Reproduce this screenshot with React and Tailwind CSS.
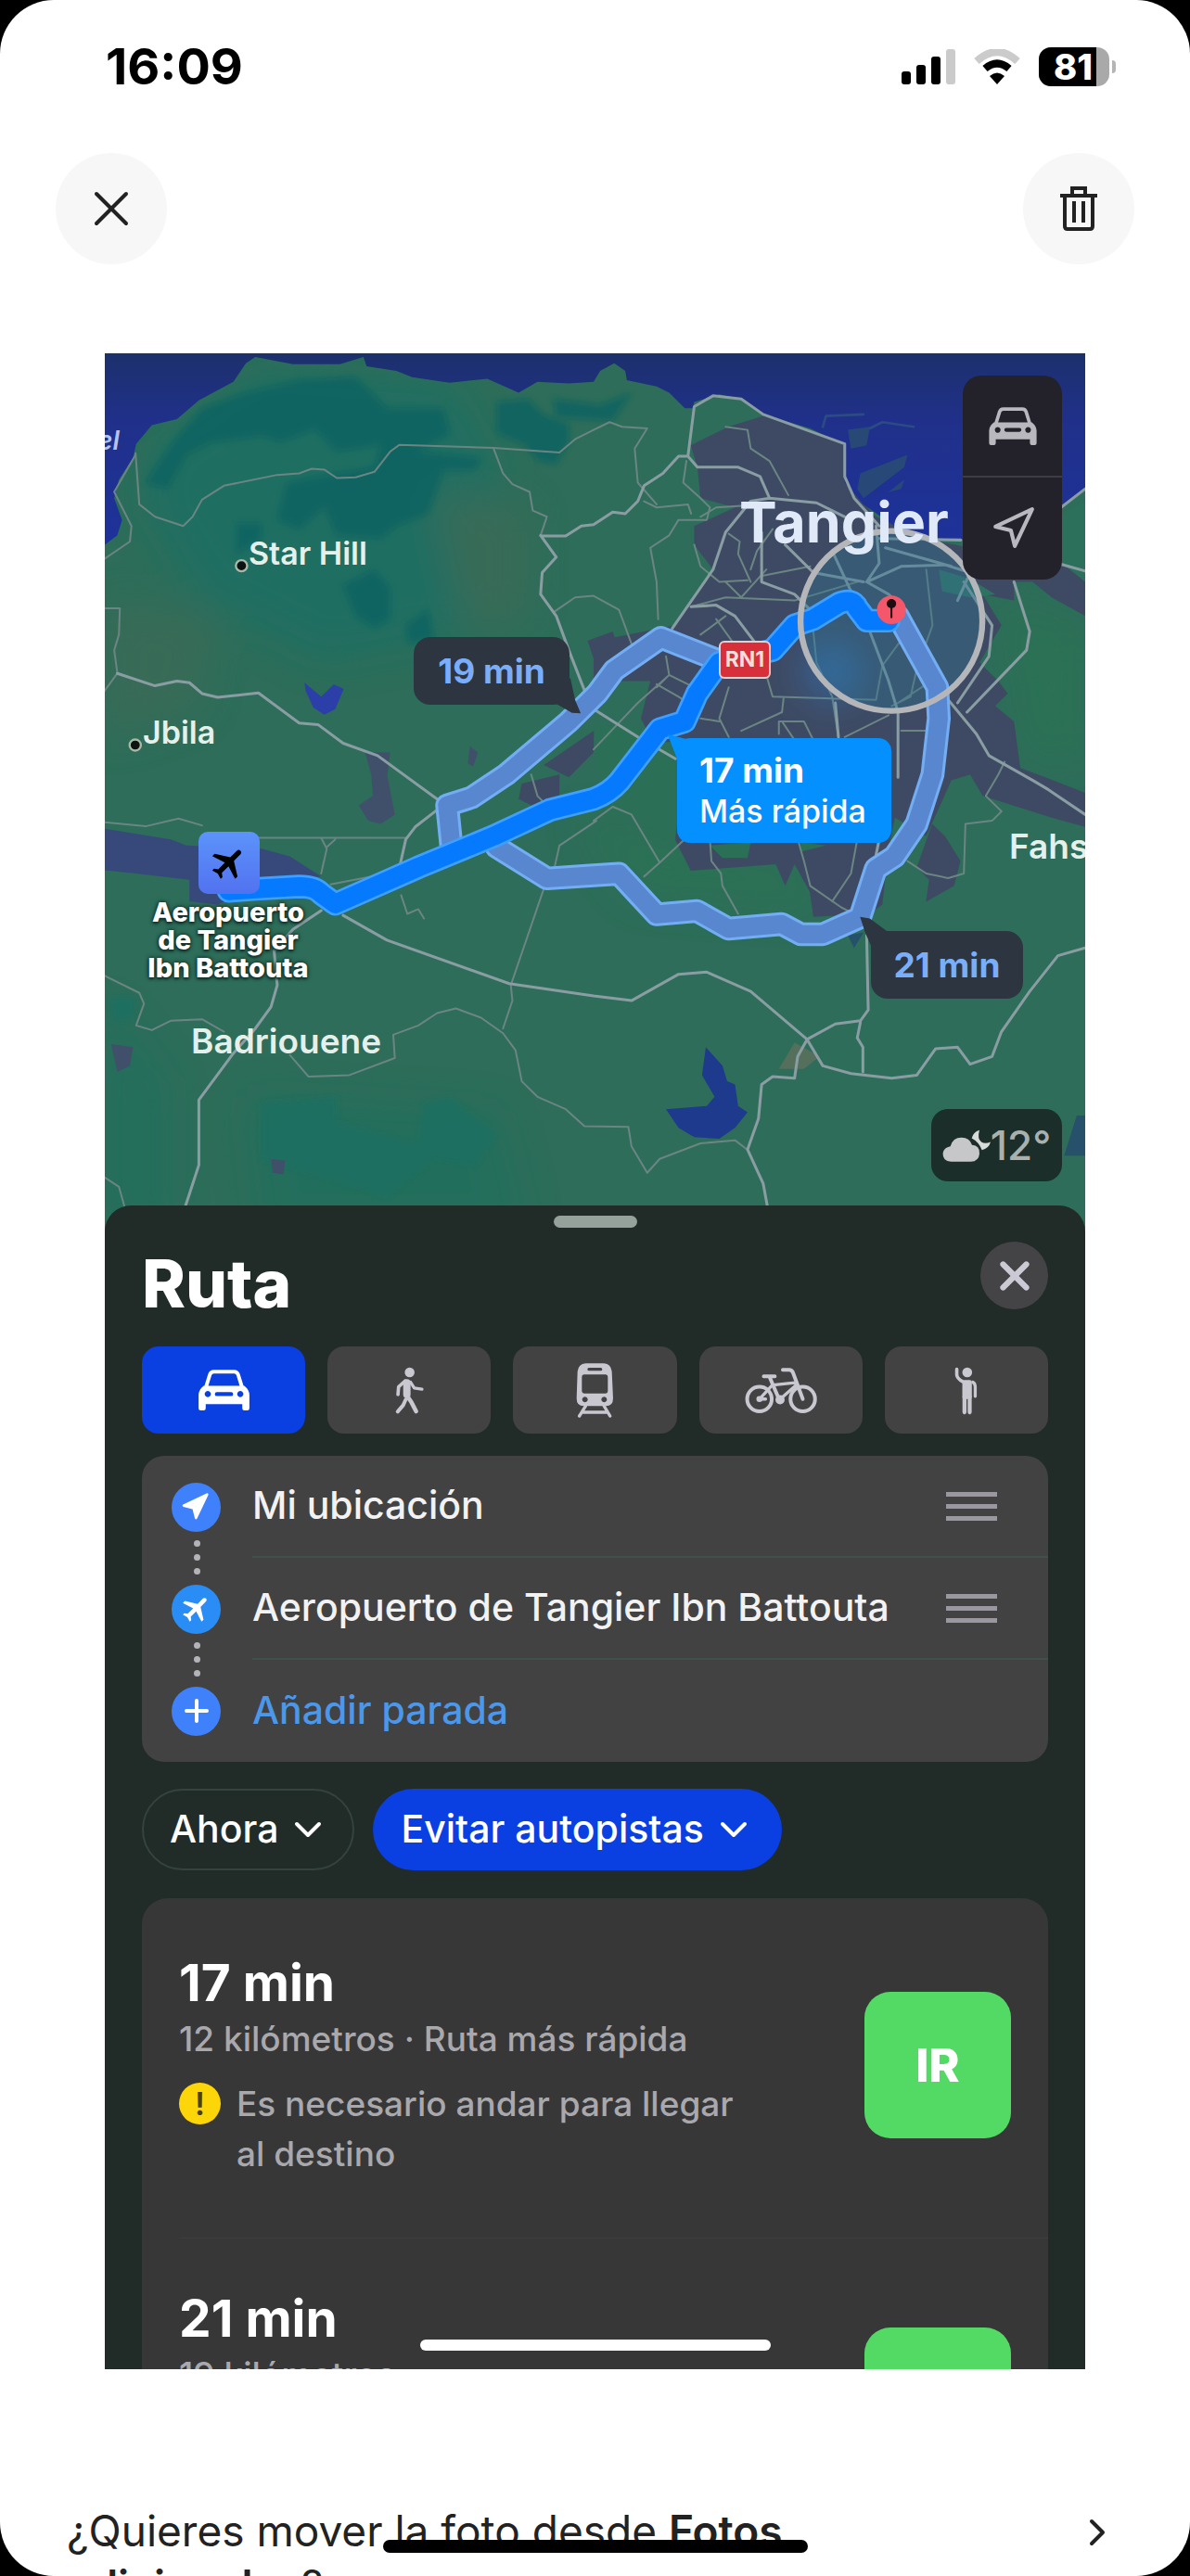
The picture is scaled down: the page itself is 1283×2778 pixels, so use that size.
import { ChevronDown, ChevronRight, Navigation, X } from 'lucide-react';
import { MdFlight } from 'react-icons/md';

function CarIcon({ className }) {
  return (
    <svg viewBox="0 0 50 42" className={className} fill="none" aria-hidden="true">
      <path d="M7 19 L11 6 Q12 3 15 3 H35 Q38 3 39 6 L43 19" stroke="currentColor" strokeWidth="3.6" />
      <path
        fill="currentColor"
        fillRule="evenodd"
        d="M5 17 H45 Q50 21 50 26 V39 Q50 41 48 41 H45 Q43 41 43 39 V35 H7 V39 Q7 41 5 41 H2 Q0 41 0 39 V26 Q0 21 5 17 Z
          M9 22 a3 3 0 1 0 0.1 0 Z M41 22 a3 3 0 1 0 0.1 0 Z
          M18 23 H32 Q34 23 34 25 Q34 27 32 27 H18 Q16 27 16 25 Q16 23 18 23 Z"
      />
    </svg>
  );
}

function WalkIcon() {
  return (
    <svg viewBox="250 95 105 160" className="w-[35px] h-[53px]" fill="none" stroke="currentColor" strokeLinecap="round" strokeLinejoin="round" aria-hidden="true">
      <circle cx="303" cy="116" r="16" fill="currentColor" stroke="none" />
      <path d="M294 150 L294 188" strokeWidth="24" />
      <path d="M288 144 L267 163 L265 188" strokeWidth="11" />
      <path d="M306 148 L318 167 L343 171" strokeWidth="10" />
      <path d="M294 192 L308 212 L324 243" strokeWidth="14" />
      <path d="M290 205 L282 223 L264 244" strokeWidth="12" />
    </svg>
  );
}

function TrainIcon() {
  return (
    <svg viewBox="842 88 126 180" className="w-[42px] h-[60px]" aria-hidden="true">
      <path
        fill="currentColor"
        fillRule="evenodd"
        d="M876 92 H936 Q958 94 961 118 L965 205 Q965 230 942 230 H870 Q847 230 847 205 L850 118 Q853 94 876 92 Z
          M872 128 Q864 128 864 138 V180 Q864 189 873 189 H940 Q948 189 948 180 V138 Q948 128 940 128 Z
          M887 106 Q882 106 882 111 Q882 116 887 116 H925 Q930 116 930 111 Q930 106 925 106 Z
          M874 200 a9 9 0 1 0 0.1 0 Z M936 200 a9 9 0 1 0 0.1 0 Z"
      />
      <path d="M876 230 L856 262 M936 230 L955 262 M868 250 H944" stroke="currentColor" strokeWidth="10" strokeLinecap="round" />
    </svg>
  );
}

function BikeIcon() {
  return (
    <svg viewBox="1386 98 240 160" className="w-20 h-[53px]" fill="none" stroke="currentColor" strokeWidth="12" strokeLinecap="round" strokeLinejoin="round" aria-hidden="true">
      <circle cx="1436" cy="206" r="40" />
      <circle cx="1577" cy="206" r="40" />
      <path d="M1450 132 H1486 M1468 132 L1500 207 M1512 111 H1534 Q1543 112 1546 122 L1577 206" />
      <path d="M1480 160 L1552 153 M1556 160 L1503 207 M1436 206 L1478 160 M1436 206 H1456" strokeWidth="10" />
      <circle cx="1503" cy="208" r="9" fill="currentColor" />
      <circle cx="1436" cy="206" r="10" fill="currentColor" stroke="none" />
    </svg>
  );
}

function HailIcon() {
  return (
    <svg viewBox="538 95 80 160" className="w-[27px] h-[53px]" fill="none" stroke="currentColor" strokeLinecap="round" strokeLinejoin="round" aria-hidden="true">
      <circle cx="582" cy="116" r="16" fill="currentColor" stroke="none" />
      <path d="M548 106 V124 Q549 136 567 146" strokeWidth="11" />
      <path d="M573 148 H590 V196 H573 Z" strokeWidth="14" fill="currentColor" />
      <path d="M600 148 Q608 152 608 164 V194" strokeWidth="10" />
      <path d="M573 196 V246 M590 196 V246" strokeWidth="13" />
    </svg>
  );
}

function TrashIcon() {
  return (
    <svg viewBox="0 0 40 48" className="w-10 h-12" fill="none" stroke="currentColor" strokeWidth="4" aria-hidden="true">
      <path d="M0 10 H40 M13 10 V2 H27 V10 M5 10 V43 Q5 46 8 46 H32 Q35 46 35 43 V10" />
      <path d="M15 16 V39 M25 16 V39" />
    </svg>
  );
}

function StatusIcons() {
  return (
    <div className="flex items-center gap-5">
      <svg viewBox="0 0 58 38" className="w-[58px] h-[38px]" aria-hidden="true">
        <rect x="0" y="24" width="10" height="14" rx="3" />
        <rect x="16" y="17" width="10" height="21" rx="3" />
        <rect x="32" y="8" width="10" height="30" rx="3" />
        <rect x="48" y="0" width="10" height="38" rx="3" fill="#cbcbcb" />
      </svg>
      <svg viewBox="0 0 50 38" className="w-[50px] h-[38px]" fill="none" aria-hidden="true">
        <path d="M3 13 Q25 -7 47 13" stroke="#cbcbcb" strokeWidth="8" />
        <path d="M12 21 Q25 10 38 21" stroke="#000" strokeWidth="8" />
        <path d="M17 29 Q25 22 33 29 L25 38 Z" fill="#000" />
      </svg>
      <div className="flex items-center gap-[3px]">
        <div className="w-[76px] h-[42px] rounded-[13px] bg-[#a9a9a9] flex">
          <div className="w-[62px] rounded-l-[13px] bg-black pr-1 text-white text-[38px] leading-[42px] font-extrabold text-right">81</div>
        </div>
        <div className="w-1 h-[14px] rounded-r-full bg-[#b5b5b5]" />
      </div>
    </div>
  );
}

const northRoute = 'M1105 1590 L1092 1460 L1170 1435 L1280 1361 L1480 1190 L1570 1100 L1625 1025 L1774 920 L1950 990';
const southRoute =
  'M1250 1595 L1410 1696 L1559 1686 L1640 1681 L1760 1812 L1889 1801 L1989 1858 L2159 1843 L2220 1876 L2290 1876 L2409 1822 L2459 1665 L2519 1625 L2589 1521 L2640 1361 L2660 1180 L2655 1080 L2529 850';
const fastRoute =
  'M395 1736 L480 1730 L620 1722 Q670 1722 690 1745 L735 1778 L1000 1660 L1240 1560 L1420 1475 L1559 1440 Q1610 1420 1640 1385 L1770 1215 L1849 1190 L1889 1100 L1960 1000 L2130 960 L2200 880 L2259 860 L2340 810 Q2385 790 2400 825 L2430 865 L2500 865';

// Land, water, streets and the three route lines
function MapDrawing() {
  return (
    <svg viewBox="0 3 3127 2840" preserveAspectRatio="none" className="w-full h-full" fill="none" strokeLinejoin="round" strokeLinecap="round" aria-hidden="true">
      <defs>
        <linearGradient id="sea" x1="0" y1="0" x2="0" y2="1">
          <stop offset="0" stopColor="#1c306c" />
          <stop offset="0.35" stopColor="#20308a" />
          <stop offset="1" stopColor="#1d329a" />
        </linearGradient>
        <filter id="soft" x="-20%" y="-20%" width="140%" height="140%">
          <feGaussianBlur stdDeviation="10" />
        </filter>
        <filter id="wide" x="-50%" y="-50%" width="200%" height="200%">
          <feGaussianBlur stdDeviation="60" />
        </filter>
      </defs>
      <rect width="3127" height="2850" fill="#2d6d59" />

      {/* vegetation */}
      <g filter="url(#wide)" opacity="0.6">
        <path fill="#167068" d="M150 300 L500 60 L1100 100 L1250 350 L1200 900 L700 1000 L300 800 L120 500 Z" />
        <path fill="#1c705f" d="M450 2400 L1250 2450 L1350 2850 L500 2850 Z M0 2100 L200 2350 L200 2850 L0 2850 Z" />
        <path fill="#2a7552" d="M2850 800 L3127 900 L3127 1300 L2950 1300 Z M1500 1500 L2200 1650 L2300 1800 L1700 1750 Z" />
        <path fill="#3f6b56" d="M1050 450 L1350 500 L1350 850 L1150 900 Z M0 800 L350 850 L300 1150 L0 1250 Z" />
      </g>
      <g filter="url(#soft)" fill="#0c6462" opacity="0.85">
        <path d="M130 420 L210 300 L310 180 L450 130 L620 90 L800 80 L900 180 L1080 180 L1100 260 L1000 320 L1200 340 L1180 380 L1080 380 L1030 520 L930 560 L880 600 L740 590 L700 500 L620 570 L550 540 L580 420 L740 390 L860 370 L880 300 L740 320 L670 250 L560 290 L500 270 L340 290 L260 330 L200 440 Z" />
        <path d="M1250 160 L1350 150 L1400 200 L1480 230 L1480 290 L1440 360 L1380 350 L1340 300 L1250 260 Z M1430 150 L1580 170 L1680 130 L1620 220 L1440 210 Z" />
        <path d="M420 550 L500 550 L500 600 L420 650 Z M760 750 L860 700 L910 760 L910 860 L860 890 L800 850 Z M960 880 L1030 830 L1050 920 L970 940 Z" />
        <path fill="#1b6f62" d="M500 2420 L740 2400 L740 2480 L1000 2560 L1020 2420 L1100 2400 L1250 2520 L1180 2620 L1050 2600 L900 2720 L500 2600 Z M20 2080 L100 2080 L90 2150 L20 2160 Z" />
      </g>

      {/* city ground */}
      <path
        fill="#3e4a63"
        d="M1869 300 L1989 240 L2100 205 L2300 270 L2360 300 L2370 430 L2460 530 L2660 610 L3060 690 L3127 700 L3127 850 L3020 790 L2960 740 L2900 740 L2900 800 L2800 780 L2860 880 L2790 1000 L2850 1060 L2880 1100 L2840 1140 L2900 1190 L2920 1340 L3000 1370 L3127 1420 L3127 1530 L3020 1500 L2800 1430 L2760 1361 L2700 1380 L2620 1560 L2520 1500 L2500 1600 L2480 1780 L2440 1810 L2260 1820 L2249 1741 L2200 1650 L2170 1720 L2140 1650 L1869 1671 L1819 1571 L1859 1250 L1750 1260 L1710 1180 L1740 1060 L1600 1060 L1559 1090 L1559 950 L1620 920 L1820 880 L1940 700 L1880 620 L1880 560 L2010 500 L1900 470 L1890 370 Z"
      />
      <path fill="#2b7056" d="M1559 1200 L1700 1210 L1790 1260 L1820 1300 L1820 1600 L1700 1500 L1600 1500 Z M2220 1580 L2300 1590 L2220 1610 Z M1930 1590 L2060 1580 L2050 1630 L1970 1630 Z" />
      <path fill="#2f7163" d="M2660 700 L2760 730 L2840 780 L2760 790 L2670 770 Z" />
      <path fill="#3e4a63" d="M2639 1520 L2680 1560 L2729 1640 L2709 1720 L2619 1771 L2629 1700 L2590 1660 Z M1330 1390 L1450 1361 L1450 1430 L1400 1480 L1320 1440 Z M1400 1330 L1560 1220 L1559 1290 L1480 1370 Z M1540 930 L1620 900 L1640 960 L1560 990 Z" />
      <path fill="#37497a" d="M0 1536 L210 1570 L260 1590 L500 1600 L590 1625 L690 1690 L540 1700 L360 1780 L270 1770 L270 1700 L100 1680 L0 1670 Z" />
      <path fill="#40506a" d="M850 1361 L900 1361 L925 1490 L880 1520 L840 1510 L810 1460 L855 1430 Z M830 1290 L910 1290 L900 1370 L850 1361 Z M20 2230 L90 2240 L80 2300 L40 2320 Z M530 2600 L575 2605 L570 2650 L535 2645 Z M1165 1270 L1190 1290 L1175 1335 L1158 1325 Z" />

      {/* sea */}
      <path
        fill="url(#sea)"
        d="M0 0 V620 L40 590 L55 540 L30 470 L45 410 L90 340 L100 295 L150 235 L230 215 L300 155 L410 95 L450 35 L480 15 L600 38 L750 38 L825 15 L835 45 L930 60 L980 80 L1100 98 L1220 85 L1320 130 L1380 95 L1480 100 L1559 95 L1580 60 L1625 35 L1660 60 L1665 90 L1760 110 L1800 130 L1850 180 L1875 180 L1880 160 L1960 135 L2030 150 L2100 200 L2250 245 L2360 300 L2360 420 L2420 490 L2560 590 L2700 605 L2790 600 L3050 500 L3127 440 V0 Z"
      />
      <path fill="#2c6f5a" d="M3050 520 L3127 480 L3127 740 L3040 670 Z" />
      <path fill="#2b5070" opacity="0.8" d="M2370 250 L2440 240 L2430 300 L2380 310 Z M2410 390 L2560 330 L2550 370 L2420 470 L2400 440 Z M2500 450 L2550 410 L2540 440 Z" />
      <path stroke="#2b4b84" strokeWidth="8" d="M2290 240 L2300 205 L2420 200 M2440 245 L2480 225 L2580 240" />
      <path fill="#2c3fa8" d="M637 1065 L690 1110 L730 1070 L762 1085 L735 1150 L700 1168 L665 1145 L640 1090 Z" />
      <path fill="#1d3a8c" d="M1917 2240 L1970 2300 L1985 2350 L2010 2360 L2020 2430 L2050 2450 L2010 2500 L1960 2535 L1880 2530 L1830 2500 L1790 2440 L1920 2430 L1945 2400 L1905 2330 Z" />
      <path fill="#5f6f5e" d="M2200 2225 L2280 2270 L2230 2310 L2150 2310 Z" opacity="0.8" />
      <path fill="#27506a" d="M3100 2460 L3127 2460 L3127 2590 L3060 2590 Z M2370 1880 L2420 1870 L2390 1920 Z" />

      {/* minor streets */}
      <g stroke="#6b8583" strokeWidth="6">
        <path d="M98 325 L110 490 L160 530 L250 560 L280 530 L310 475 L380 430 L550 395 L620 390 L660 375 L700 378 L740 405 L800 403 L860 385 L910 320 L940 298 L1240 308 L1450 323 L1500 280 L1559 250 L1610 225 L1650 240 L1730 245 L1690 310 L1700 420 L1760 490" />
        <path d="M1240 310 L1270 390 L1300 425 L1355 450 L1365 510 L1410 530 L1390 590 M1435 835 L1500 790 L1559 785 L1640 830 L1680 940 M0 825 L48 825 L45 910 L30 960 L40 1035 L0 1090 M98 330 L30 450 L85 560 L80 610 L0 665" />
        <path d="M0 1515 L130 1528 L235 1503 L310 1525 M490 1565 L960 1565 M690 1565 L708 1600 L690 1680 M735 1570 L708 1595 M720 1715 L850 1690 L940 1650 M945 1750 L965 1810 L1000 1795 L1018 1825" />
        <path d="M0 2010 L110 2065 L125 2100 L100 2170 L150 2185 L210 2155 L310 2150 L380 2190 M590 2265 L650 2335 L780 2330 L925 2275 L920 2200 L1000 2170 L1060 2130 L1120 2115 L1200 2145 L1270 2195 L1310 2250 L1330 2350 L1380 2400 L1470 2440 L1530 2495 L1670 2497 L1680 2560 L1730 2645 L1770 2600 L1900 2550 L2010 2540 L2049 2570 M1400 1730 L1295 2040 L1300 2090 L1270 2180" />
        <path d="M0 2660 L45 2690 L70 2780 M1360 1361 L1380 1430 L1420 1471 M1568 1510 L1450 1590 L1430 1680 M1559 1510 L1620 1465 L1680 1490 L1770 1645 L1860 1560 M1770 1645 L1720 1690 M1930 1570 L1935 1640 L1965 1680 L1970 1720 L2020 1810" />
        <path d="M1855 350 L1845 420 L1900 470 L1930 500 L1920 540 L1830 540 L1800 590 L1740 630 L1760 740 L1765 860 M1720 480 L1760 500 L1860 490 L1870 520 M1880 620 L1900 690 L1960 740 L2050 735 M1980 240 L2050 250 L2060 310 L2120 350 L2180 460" />
        <path d="M1900 530 L1950 500 L2030 495 M1990 585 L2025 610 L2020 650 L2060 740 M2130 570 L2080 640 L2060 700 M2100 720 L2250 690 M1980 740 L2030 790 L2110 700 M1870 820 L1980 790 L2200 800 L2400 740 M1900 910 L1980 850 M1950 860 L2000 930" />
        <path d="M1790 980 L1800 1040 L1870 1075 M1760 1080 L1800 1040 M1760 1070 L1830 1110 L1860 1130 M1559 1280 L1700 1130 L1800 1040 M2080 1030 L2110 1040 L2130 1110 L2460 1120 L2480 1010 L2560 900 M2165 1115 L2160 1160 L2030 1220 M2260 900 L2270 1000 L2320 1110 L2340 1240 M1990 1080 L1960 1180 L1990 1240 M1900 1180 L1960 1190" />
        <path d="M2150 1230 L2150 1190 L2230 1190 L2260 1250 M2160 1190 L2200 1250 M2540 1220 L2620 1220 M2360 1240 L2500 1170 M2530 1130 L2620 1070 M2510 1140 L2570 1110 L2590 1020 L2640 880 L2620 700 M2210 1569 L2230 1640 L2250 1720 L2350 1790 L2370 1800 M2400 1570 L2380 1680 L2320 1770 M2560 1640 L2620 1680 L2690 1695 L2740 1680 L2745 1520 L2830 1510 L2860 1480 L2810 1430 L2850 1361 L2870 1320" />
      </g>

      {/* main streets */}
      <g stroke="#899da3" strokeWidth="9">
        <path d="M40 1035 L160 1075 L230 1060 L270 1065 L310 1100 L360 1112 L490 1098 L620 1195 L680 1200 L760 1260 L870 1300 L1060 1440 M1060 1475 L990 1530 L960 1570 L940 1660 M760 1815 L900 1895 L1290 2035 L1559 2075 L1680 2090 L1830 2005 L1920 1998 L2060 2060 L2240 2215 L2290 2300 L2380 2325 L2510 2340 L2590 2330 L2650 2245 L2720 2240 L2760 2295 L2830 2270 L2860 2190 L2950 2060 L3040 1945 L3127 1920" />
        <path d="M690 1800 L600 1860 L540 1930 L550 2040 L530 2110 L480 2180 L410 2260 L300 2410 L300 2620 L245 2790 M2240 2215 L2330 2165 L2410 2155 L2435 2120 L2430 1880 M2410 2160 L2400 2210 L2418 2240 L2418 2320 M2240 2215 L2210 2270 L2200 2340 L2130 2335 L2095 2360 L2085 2470 L2050 2570 L2100 2680 L2120 2790" />
        <path d="M1390 590 L1440 660 L1395 710 L1390 780 L1440 850 L1480 960 L1530 1090 M1395 592 L1470 592 L1520 560 L1559 555 L1620 515 L1660 520 L1700 480 L1720 430 L1780 390 L1830 335 L1860 335 L1880 175 L1940 140 L2030 150 L2100 200 L2360 295 L2360 400 L2390 470 L2470 560 M1860 335 L1890 370 L2020 370 L2090 400 L2120 470 L2270 485 L2360 530 M2120 470 L2060 480 L1980 580 L1940 700 L1810 890" />
        <path d="M2095 580 L2095 740 L2200 780 L2250 830 M2170 620 L2260 710 L2420 740 M1870 820 L1950 815 L2010 850 L2070 930 M2320 640 L2380 770 M2460 560 L2470 680 L2430 740 L2500 780 L2540 820 M2430 740 L2540 690 L2680 685 L2760 710 L2720 800 M2490 630 L2700 690 M2470 600 L2730 605" />
        <path d="M2900 740 L2950 900 L2940 960 L2750 1160 M2740 740 L2830 880 L2820 980 L2720 1130 M2690 1120 L2780 1230 L2820 1300 L2960 1380 L3010 1410 L3127 1490 M2440 900 L2500 1060 L2530 1160 L2530 1370 M2330 1130 L2340 1240 M3050 500 L3127 440 M3040 680 L3127 705 M1559 1150 L1700 1240 L1820 1310 M2470 1570 L2460 1620" />
      </g>

      {/* search area */}
      <circle cx="2509" cy="868" r="288" fill="#2f7390" opacity="0.4" />
      <circle cx="2320" cy="1030" r="90" fill="#2e7cc4" opacity="0.55" filter="url(#wide)" />

      {/* alternative routes */}
      <g stroke="#73aef5" strokeWidth="76">
        <path d={northRoute} />
        <path d={southRoute} />
      </g>
      <g stroke="#5987cf" strokeWidth="58">
        <path d={northRoute} />
        <path d={southRoute} />
      </g>

      {/* fastest route */}
      <path stroke="#3fa0ff" strokeWidth="76" d={fastRoute} />
      <path stroke="#067aff" strokeWidth="60" d={fastRoute} />

      <circle cx="2509" cy="866" r="290" stroke="#b4b6ba" strokeWidth="19" />
      <circle cx="2509" cy="830" r="46" fill="#f4566a" />
      <circle cx="2509" cy="810" r="15" fill="#1d0d12" />
      <path d="M2509 813 V854" stroke="#1d0d12" strokeWidth="6" />

      {/* village dots */}
      <g fill="#0b1411" stroke="#a9b8a8" strokeWidth="7">
        <circle cx="436" cy="688" r="18" />
        <circle cx="97" cy="1266" r="18" />
      </g>

      {/* bubble tails */}
      <path fill="#2d3640" d="M1400 1110 L1485 1050 L1500 1120 L1518 1164 L1490 1162 Z M2409 1820 L2440 1825 L2500 1870 L2460 1950 L2425 1870 Z" />
      <path fill="#0490ff" d="M1795 1232 L1870 1250 L1860 1320 L1825 1310 Z" />
    </svg>
  );
}

function MapView() {
  return (
    <div className="relative h-[950px] overflow-hidden text-[#e6f0ea]">
      <MapDrawing />

      {/* place names */}
      <span className="absolute -left-2 top-[76px] text-[28px] leading-9 italic font-semibold text-[#b4c5f5]">el</span>
      <span className="absolute left-[155px] top-[196px] text-[34px] leading-10 font-semibold">Star Hill</span>
      <span className="absolute left-[41px] top-[389px] text-[34px] leading-10 font-semibold">Jbila</span>
      <span className="absolute left-[684px] top-[147px] text-[61px] leading-[70px] font-bold text-[#dfe9f7]">Tangier</span>
      <span className="absolute left-[93px] top-[720px] text-[37px] leading-[44px] font-semibold">Badriouene</span>
      <span className="absolute left-[975px] top-[510px] text-[37px] leading-[44px] font-semibold">Fahs</span>

      {/* airport pin */}
      <div className="absolute left-[101px] top-[516px] w-[66px] h-[67px] rounded-[10px] bg-linear-to-b from-[#5c93fa] to-[#5272f0] flex items-center justify-center text-black">
        <MdFlight className="w-11 h-11 rotate-45" />
      </div>
      <div className="absolute left-[23px] top-[588px] w-[220px] text-center text-[29px] leading-[30px] font-extrabold text-white [text-shadow:0_0_3px_#16302a,0_2px_3px_#16302a,0_0_5px_#16302a]">
        Aeropuerto<br />de Tangier<br />Ibn Battouta
      </div>

      {/* route bubbles */}
      <button type="button" className="absolute left-[333px] top-[306px] w-[168px] h-[73px] rounded-[18px] bg-[#2d3640] text-[#7aaefb] text-[37px] font-bold">19 min</button>
      <button type="button" className="absolute left-[826px] top-[623px] w-[164px] h-[73px] rounded-[18px] bg-[#2d3640] text-[#7aaefb] text-[37px] font-bold">21 min</button>
      <button type="button" className="absolute left-[617px] top-[415px] w-[231px] h-[113px] rounded-[14px] bg-[#0490ff] pl-6 text-left text-white leading-[44px]">
        <span className="block text-[37px] font-bold">17 min</span>
        <span className="block text-[34px] font-medium">Más rápida</span>
      </button>
      <span className="absolute left-[662px] top-[310px] w-[56px] h-[41px] rounded-md border-2 border-[#f4c9c9] bg-[#d8303a] text-[23px] leading-[37px] text-center font-bold text-[#f6dcdc]">RN1</span>

      {/* map controls */}
      <div className="absolute right-[25px] top-[24px] w-[107px] rounded-[20px] bg-[#23222b] flex flex-col divide-y-2 divide-[#3c3c44] text-[#b9b8bf]">
        <button type="button" aria-label="Modo de mapa" className="h-[110px] flex items-center justify-center">
          <CarIcon className="w-[52px] h-[43px]" />
        </button>
        <button type="button" aria-label="Mi posición" className="h-[110px] flex items-center justify-center">
          <Navigation className="w-[50px] h-[50px]" strokeWidth={2} />
        </button>
      </div>

      {/* weather */}
      <div className="absolute right-[25px] top-[815px] w-[141px] h-[78px] rounded-[18px] bg-[#1c2e29] flex items-center justify-center text-[#a9b1ae] text-[44px] font-medium">
        <svg viewBox="0 0 156 104" className="w-[52px] h-[35px]" aria-hidden="true">
          <path fill="#d7dbd9" d="M95 28 Q100 8 120 2 Q112 30 126 40 Q138 48 156 40 Q150 62 128 66 Q118 40 95 28 Z" />
          <path fill="#c6c7c8" d="M28 104 Q0 102 2 76 Q4 58 26 54 Q34 26 62 26 Q88 26 96 50 Q122 52 120 78 Q118 102 92 104 Z" />
        </svg>
        12°
      </div>
    </div>
  );
}

const modes = [
  { label: 'En coche', icon: <CarIcon className="w-[55px] h-[46px]" /> },
  { label: 'A pie', icon: <WalkIcon /> },
  { label: 'Transporte', icon: <TrainIcon /> },
  { label: 'Bicicleta', icon: <BikeIcon /> },
  { label: 'Taxi', icon: <HailIcon /> },
];

const stops = [
  { name: 'Mi ubicación', icon: <Navigation className="w-8 h-8 mr-1" fill="currentColor" />, bg: 'bg-[#3f80fb]' },
  { name: 'Aeropuerto de Tangier Ibn Battouta', icon: <MdFlight className="w-9 h-9 rotate-45" />, bg: 'bg-[#2a8df5]' },
];

function Dots() {
  return (
    <span className="absolute z-10 left-[56px] top-[91px] flex flex-col gap-2">
      <i className="w-[7px] h-[7px] rounded-full bg-[#b5b3ba]" />
      <i className="w-[7px] h-[7px] rounded-full bg-[#b5b3ba]" />
      <i className="w-[7px] h-[7px] rounded-full bg-[#b5b3ba]" />
    </span>
  );
}

function RouteOption({ time, detail, warning }) {
  return (
    <div className="h-[362px] px-10 pt-[57px] flex items-start justify-between">
      <div className="font-medium text-[37px] leading-[54px]">
        <h2 className="text-[55px] leading-[60px] font-bold text-white">{time}</h2>
        <p className="mt-1">{detail}</p>
        {warning && (
          <div className="mt-4 flex gap-[17px]">
            <span className="mt-1 w-[45px] h-[45px] rounded-full bg-[#fdd60a] text-[#4a4010] text-[34px] leading-[45px] font-semibold text-center shrink-0">!</span>
            <p className="w-[560px]">{warning}</p>
          </div>
        )}
      </div>
      <button type="button" className="mt-10 w-[158px] h-[158px] shrink-0 rounded-[28px] bg-[#53da64] text-white text-[50px] font-extrabold">IR</button>
    </div>
  );
}

function RouteSheet() {
  return (
    <section className="relative -mt-[31px] rounded-t-[28px] bg-[#212c29] px-10 text-white">
      <div className="pt-[11px] flex justify-center">
        <div className="w-[90px] h-[13px] rounded-full bg-[#95a19b]" />
      </div>
      <div className="mt-[15px] flex items-start justify-between">
        <h1 className="pt-[6px] text-[71px] leading-[78px] font-extrabold">Ruta</h1>
        <button type="button" aria-label="Cerrar" className="w-[73px] h-[73px] rounded-full bg-[#444446] text-[#cbc9d3] flex items-center justify-center">
          <X className="w-[50px] h-[50px]" strokeWidth={3} />
        </button>
      </div>

      <div className="mt-[29px] grid grid-cols-5 gap-6">
        {modes.map((m, i) => (
          <button
            key={m.label}
            type="button"
            aria-label={m.label}
            className={`h-[94px] rounded-[18px] flex items-center justify-center ${i === 0 ? 'bg-[#0a3fe2] text-white' : 'bg-[#424243] text-[#c9c7d0]'}`}
          >
            {m.icon}
          </button>
        ))}
      </div>

      <ul className="mt-6 rounded-[24px] bg-[#424242] text-[41px] font-medium text-[#f2f2f2]">
        {stops.map(s => (
          <li key={s.name} className="relative h-[110px] flex items-center pl-8">
            <span className={`w-[53px] h-[53px] rounded-full flex items-center justify-center text-white shrink-0 ${s.bg}`}>{s.icon}</span>
            <Dots />
            <div className="ml-[34px] h-full flex-1 flex items-center justify-between pr-[55px] border-b-2 border-[#40504b]">
              <span className="whitespace-nowrap">{s.name}</span>
              <span className="flex flex-col gap-2">
                <i className="w-[55px] h-[5px] bg-[#9a97a1]" />
                <i className="w-[55px] h-[5px] bg-[#9a97a1]" />
                <i className="w-[55px] h-[5px] bg-[#9a97a1]" />
              </span>
            </div>
          </li>
        ))}
        <li className="h-[110px] flex items-center pl-8">
          <button type="button" className="flex items-center gap-[34px] text-[#4b97ea]">
            <span className="w-[53px] h-[53px] rounded-full flex items-center justify-center bg-[#3f80fb]">
              <svg viewBox="0 0 26 26" className="w-[26px] h-[26px]" stroke="#fff" strokeWidth="4" strokeLinecap="round" aria-hidden="true">
                <path d="M13 2 V24 M2 13 H24" />
              </svg>
            </span>
            Añadir parada
          </button>
        </li>
      </ul>

      <div className="mt-[29px] flex gap-5 text-[41px] font-medium">
        <button type="button" className="h-[88px] pl-[28px] pr-6 flex items-center gap-2 rounded-full border-2 border-[#35433e]">
          Ahora
          <ChevronDown className="w-12 h-12" strokeWidth={2} />
        </button>
        <button type="button" className="h-[88px] pl-[30px] pr-7 flex items-center gap-2 rounded-full bg-[#0a3fe2]">
          Evitar autopistas
          <ChevronDown className="w-12 h-12" strokeWidth={2} />
        </button>
      </div>

      <div className="mt-[30px] pt-1 rounded-t-[28px] bg-[#373737] text-[#a9a8ad]">
        <RouteOption time="17 min" detail="12 kilómetros · Ruta más rápida" warning="Es necesario andar para llegar al destino" />
        <div className="ml-10 h-px -mb-px bg-[#3e3e3e]" />
        <RouteOption time="21 min" detail="19 kilómetros" />
      </div>
    </section>
  );
}

export default function App() {
  return (
    <div className="h-screen bg-black font-['Inter',sans-serif]">
      <div className="relative h-full overflow-hidden rounded-[58px] bg-white text-black">
        {/* Status bar */}
        <div className="h-[144px] pl-[114px] pr-[80px] flex items-center justify-between">
          <span className="text-[54px] font-bold leading-none">16:09</span>
          <StatusIcons />
        </div>

        {/* Actions */}
        <header className="mt-[21px] px-[60px] flex justify-between text-[#222]">
          <button type="button" aria-label="Cerrar" className="w-[120px] h-[120px] rounded-full bg-[#f7f7f7] flex items-center justify-center">
            <X className="w-16 h-16" strokeWidth={1.5} />
          </button>
          <button type="button" aria-label="Eliminar" className="w-[120px] h-[120px] rounded-full bg-[#f7f7f7] flex items-center justify-center">
            <TrashIcon />
          </button>
        </header>

        {/* Photo */}
        <main className="relative mt-24 mx-[113px] h-[2174px] overflow-hidden">
          <MapView />
          <RouteSheet />
          <div className="absolute bottom-5 inset-x-0 mx-auto w-[378px] h-3 rounded-full bg-white" />
        </main>

        {/* Move prompt */}
        <a href="#mover" className="mt-[145px] pl-[72px] pr-[76px] flex items-start justify-between text-[#222]">
          <p className="w-[880px] text-[46px] leading-[59px]">
            ¿Quieres mover la foto desde <b className="font-semibold">Fotos adicionales</b>?
          </p>
          <ChevronRight className="mt-[7px] w-12 h-12" strokeWidth={2} />
        </a>
        <div className="absolute bottom-[25px] inset-x-0 mx-auto w-[458px] h-[14px] rounded-full bg-black" />
      </div>
    </div>
  );
}
